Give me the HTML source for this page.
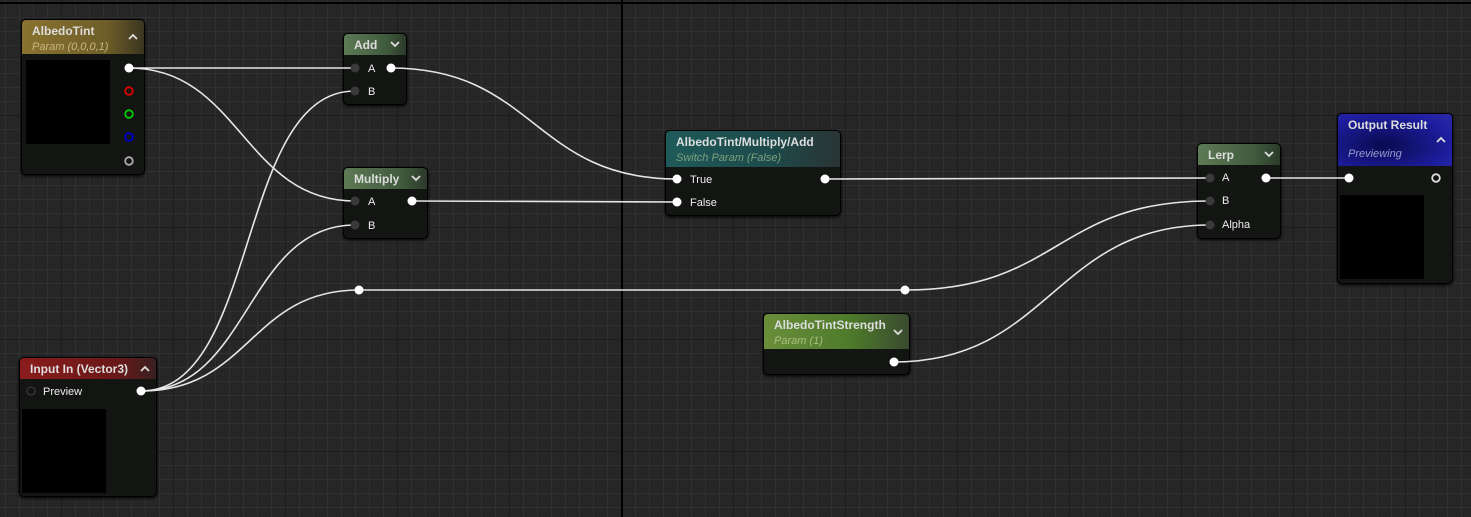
<!DOCTYPE html>
<html><head><meta charset="utf-8"><style>
body{margin:0;width:1471px;height:517px;overflow:hidden;background:#262626;font-family:"Liberation Sans",sans-serif;position:relative}
.grid{position:absolute;inset:0;
background-image:
linear-gradient(#000,#000),linear-gradient(#000,#000),
linear-gradient(90deg,#1d1d1d 1px,transparent 1px),linear-gradient(#1d1d1d 1px,transparent 1px),
linear-gradient(90deg,#313131 1px,transparent 1px),linear-gradient(#313131 1px,transparent 1px);
background-size:2px 517px,1471px 2px,112px 112px,112px 112px,14px 14px,14px 14px;
background-position:621px 0,0 2px,61px 3px,61px 3px,5px 3px,5px 3px;
background-repeat:no-repeat,no-repeat,repeat,repeat,repeat,repeat}
.n{position:absolute;background:#131513;border:1px solid #000;border-radius:5px;box-shadow:0 1px 3px #000;overflow:hidden}
.h{position:relative;color:#ddd;font-size:12px;font-weight:bold;padding:4px 0 0 10px;box-sizing:border-box}
.s{font-weight:normal;font-style:italic;font-size:11px;margin-top:3px}
.car{position:absolute;right:6px;top:7px;width:10px;height:7px}
.lbl{position:absolute;color:#eee;font-size:11px}
.blk{position:absolute;background:#000}
svg{position:absolute;left:0;top:0}
</style></head><body>
<div class="grid"></div>

<div class="n" style="left:21px;top:19px;width:122px;height:154px">
<div class="h" style="height:34px;background:linear-gradient(90deg,#8a7330,#6e5d28 70%,#3a3520)">AlbedoTint<div class="s" style="color:#c8b880">Param (0,0,0,1)</div><svg class="car" style="top:13px;left:auto" viewBox="0 0 10 7"><path d="M1 6 L5 2 L9 6" stroke="#ddd" stroke-width="1.8" fill="none"/></svg></div>
<div class="blk" style="left:4px;top:40px;width:84px;height:84px"></div></div>

<div class="n" style="left:343px;top:33px;width:62px;height:70px">
<div class="h" style="height:21px;background:linear-gradient(90deg,#5d7a55,#3f5a3c 70%,#2c3a2a)">Add<svg class="car" style="left:auto" viewBox="0 0 10 7"><path d="M1 1 L5 5 L9 1" stroke="#ddd" stroke-width="1.8" fill="none"/></svg></div>
<div class="lbl" style="left:24px;top:29px">A</div><div class="lbl" style="left:24px;top:52px">B</div></div>

<div class="n" style="left:343px;top:167px;width:83px;height:70px">
<div class="h" style="height:21px;background:linear-gradient(90deg,#5d7a55,#3f5a3c 70%,#2c3a2a)">Multiply<svg class="car" style="left:auto" viewBox="0 0 10 7"><path d="M1 1 L5 5 L9 1" stroke="#ddd" stroke-width="1.8" fill="none"/></svg></div>
<div class="lbl" style="left:24px;top:28px">A</div><div class="lbl" style="left:24px;top:52px">B</div></div>

<div class="n" style="left:665px;top:130px;width:174px;height:84px">
<div class="h" style="height:36px;background:linear-gradient(90deg,#1f5a5a,#1d4a4a 60%,#2a3434)">AlbedoTint/Multiply/Add<div class="s" style="color:#7da07d">Switch Param (False)</div></div>
<div class="lbl" style="left:24px;top:43px">True</div><div class="lbl" style="left:24px;top:66px">False</div></div>

<div class="n" style="left:763px;top:313px;width:145px;height:60px">
<div class="h" style="height:35px;background:linear-gradient(90deg,#6a8e3a,#4d7a2a 60%,#3a4a30)">AlbedoTintStrength<div class="s" style="color:#a8c080">Param (1)</div><svg class="car" style="top:15px;left:auto" viewBox="0 0 10 7"><path d="M1 1 L5 5 L9 1" stroke="#ddd" stroke-width="1.8" fill="none"/></svg></div></div>

<div class="n" style="left:1197px;top:143px;width:82px;height:94px">
<div class="h" style="height:21px;background:linear-gradient(90deg,#5d7a55,#3f5a3c 70%,#2c3a2a)">Lerp<svg class="car" style="left:auto" viewBox="0 0 10 7"><path d="M1 1 L5 5 L9 1" stroke="#ddd" stroke-width="1.8" fill="none"/></svg></div>
<div class="lbl" style="left:24px;top:28px">A</div><div class="lbl" style="left:24px;top:51px">B</div><div class="lbl" style="left:24px;top:75px">Alpha</div></div>

<div class="n" style="left:1337px;top:113px;width:114px;height:169px">
<div class="h" style="height:52px;background:radial-gradient(ellipse at 40% 60%,#0a0a50,#1e1ea0 70%,#2a2aa8)">Output Result<div class="s" style="color:#9a9ad0;margin-top:16px">Previewing</div><svg class="car" style="top:22px;left:auto" viewBox="0 0 10 7"><path d="M1 6 L5 2 L9 6" stroke="#ddd" stroke-width="1.8" fill="none"/></svg></div>
<div class="blk" style="left:2px;top:81px;width:84px;height:84px"></div></div>

<div class="n" style="left:19px;top:357px;width:136px;height:138px">
<div class="h" style="height:21px;background:linear-gradient(90deg,#8a1c1c,#6a1818 70%,#3a2020)">Input In (Vector3)<svg class="car" style="left:auto" viewBox="0 0 10 7"><path d="M1 6 L5 2 L9 6" stroke="#ddd" stroke-width="1.8" fill="none"/></svg></div>
<div class="lbl" style="left:23px;top:28px">Preview</div>
<div class="blk" style="left:2px;top:51px;width:84px;height:84px"></div></div>

<svg width="1471" height="517" fill="none">
<g stroke="#e6e6e6" stroke-width="1.6">
<path d="M129 68 L355 68"/>
<path d="M129 68 C240 68 244 201 355 201"/>
<path d="M141 391 C260 391 236 91 355 91"/>
<path d="M141 391 C250 391 246 225 355 225"/>
<path d="M141 391 C250 391 250 290 359 290"/>
<path d="M359 290 L905 290"/>
<path d="M905 290 C1060 290 1055 201 1210 201"/>
<path d="M391 68 C535 68 533 179 677 179"/>
<path d="M412 201 L677 202"/>
<path d="M825 179 L1210 178"/>
<path d="M894 362 C1050 362 1054 225 1210 225"/>
<path d="M1266 178 L1349 178"/>
</g>
<g fill="#fff">
<circle cx="129" cy="68" r="4.5"/><circle cx="391" cy="68" r="4.5"/><circle cx="412" cy="201" r="4.5"/>
<circle cx="677" cy="179" r="4.5"/><circle cx="677" cy="202" r="4.5"/><circle cx="825" cy="179" r="4.5"/>
<circle cx="894" cy="362" r="4.5"/><circle cx="1266" cy="178" r="4.5"/><circle cx="1349" cy="178" r="4.5"/>
<circle cx="141" cy="391" r="4.5"/><circle cx="359" cy="290" r="4.5"/><circle cx="905" cy="290" r="4.5"/>
</g>
<g fill="#3a3a3a"><circle cx="355" cy="68" r="4.5"/><circle cx="355" cy="91" r="4.5"/><circle cx="355" cy="201" r="4.5"/><circle cx="355" cy="225" r="4.5"/>
<circle cx="1210" cy="178" r="4.5"/><circle cx="1210" cy="201" r="4.5"/><circle cx="1210" cy="225" r="4.5"/></g>
<circle cx="31" cy="391" r="4" stroke="#333" stroke-width="1.5"/>
<g stroke-width="1.8"><circle cx="129" cy="91" r="3.8" stroke="#d00"/><circle cx="129" cy="114" r="3.8" stroke="#0c0"/><circle cx="129" cy="137" r="3.8" stroke="#00c"/><circle cx="129" cy="161" r="3.8" stroke="#aaa"/><circle cx="1436" cy="178" r="3.8" stroke="#ddd"/></g>
</svg>
</body></html>
